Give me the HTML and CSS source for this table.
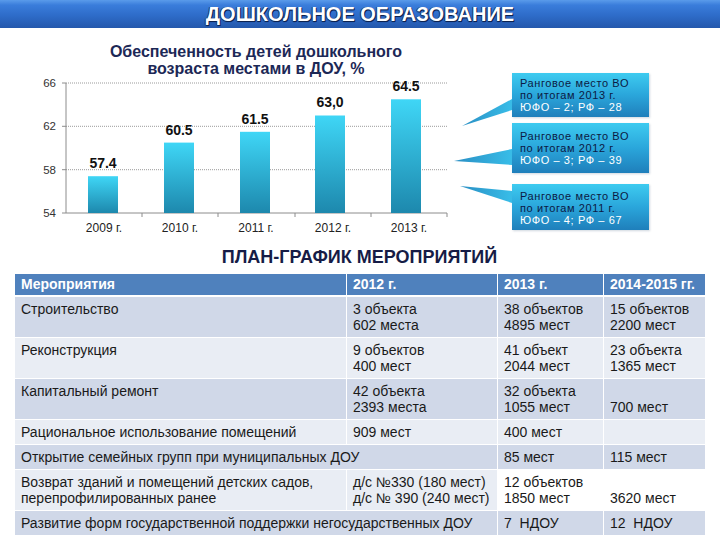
FILE: index.html
```html
<!DOCTYPE html>
<html lang="ru">
<head>
<meta charset="utf-8">
<title>Дошкольное образование</title>
<link rel="stylesheet" href="styles.css">
</head>
<body>
<header class="topbar"><h1>ДОШКОЛЬНОЕ ОБРАЗОВАНИЕ</h1></header>

<section class="chart-area">
  <div class="chart">
    <h2 class="chart-title">Обеспеченность детей дошкольного<br>возраста местами в ДОУ, %</h2>
    <svg class="chart-svg" width="512" height="162" viewBox="0 0 512 162">
      <defs>
        <linearGradient id="bar" x1="0" y1="0" x2="0" y2="1">
          <stop offset="0" stop-color="#3fd6f6"/>
          <stop offset="1" stop-color="#1d88ad"/>
        </linearGradient>
        <linearGradient id="tail" x1="0" y1="0" x2="1" y2="0">
          <stop offset="0" stop-color="#2a8fc4"/>
          <stop offset="1" stop-color="#38bde8"/>
        </linearGradient>
      </defs>
      <g class="grid">
        <line x1="66" y1="5" x2="447" y2="5"/>
        <line x1="66" y1="48.3" x2="447" y2="48.3"/>
        <line x1="66" y1="91.7" x2="447" y2="91.7"/>
      </g>
      <g class="axis">
        <line x1="66" y1="5" x2="66" y2="135"/>
        <line x1="66" y1="135" x2="447" y2="135"/>
        <line x1="62" y1="5" x2="66" y2="5"/>
        <line x1="62" y1="48.3" x2="66" y2="48.3"/>
        <line x1="62" y1="91.7" x2="66" y2="91.7"/>
        <line x1="62" y1="135" x2="66" y2="135"/>
        <line x1="142" y1="135" x2="142" y2="139"/>
        <line x1="218" y1="135" x2="218" y2="139"/>
        <line x1="295" y1="135" x2="295" y2="139"/>
        <line x1="371" y1="135" x2="371" y2="139"/>
        <line x1="447" y1="135" x2="447" y2="139"/>
      </g>
      <g class="ylabels">
        <text x="56" y="9">66</text>
        <text x="56" y="52.3">62</text>
        <text x="56" y="95.7">58</text>
        <text x="56" y="139">54</text>
      </g>
      <g>
        <rect x="88" y="98.2" width="30" height="36.8" fill="url(#bar)"/>
        <rect x="164" y="64.6" width="30" height="70.4" fill="url(#bar)"/>
        <rect x="240" y="53.8" width="30" height="81.2" fill="url(#bar)"/>
        <rect x="315" y="37.5" width="30" height="97.5" fill="url(#bar)"/>
        <rect x="391" y="21.3" width="30" height="113.7" fill="url(#bar)"/>
      </g>
      <g class="values">
        <text x="103" y="90">57.4</text>
        <text x="179" y="56.5">60.5</text>
        <text x="255" y="45.5">61.5</text>
        <text x="330" y="29">63,0</text>
        <text x="406" y="12.5">64.5</text>
      </g>
      <g class="xlabels">
        <text x="104" y="154">2009 г.</text>
        <text x="180" y="154">2010 г.</text>
        <text x="256" y="154">2011 г.</text>
        <text x="333" y="154">2012 г.</text>
        <text x="409" y="154">2013 г.</text>
      </g>
      <g fill="url(#tail)">
        <polygon points="512,21 462,48 512,32"/>
        <polygon points="512,71 454,83 512,87"/>
        <polygon points="512,113 460,108 512,125"/>
      </g>
    </svg>
  </div>
  <div class="callouts">
    <div class="callout c1"><span class="dark">Ранговое место ВО<br>по итогам 2013 г.</span><br><span class="light">ЮФО – 2; РФ – 28</span></div>
    <div class="callout c2"><span class="dark">Ранговое место ВО<br>по итогам 2012 г.</span><br><span class="light">ЮФО – 3; РФ – 39</span></div>
    <div class="callout c3"><span class="dark">Ранговое место ВО<br>по итогам 2011 г.</span><br><span class="light">ЮФО – 4; РФ – 67</span></div>
  </div>
</section>

<h2 class="plan-title">ПЛАН-ГРАФИК МЕРОПРИЯТИЙ</h2>

<table class="plan">
  <colgroup>
    <col class="w1"><col class="w2"><col class="w3"><col class="w4">
  </colgroup>
  <thead>
    <tr><th>Мероприятия</th><th>2012 г.</th><th>2013 г.</th><th>2014-2015 гг.</th></tr>
  </thead>
  <tbody>
    <tr class="dark-row"><td>Строительство</td><td>3 объекта<br>602 места</td><td>38 объектов<br>4895 мест</td><td>15 объектов<br>2200 мест</td></tr>
    <tr class="light-row"><td>Реконструкция</td><td>9 объектов<br>400 мест</td><td>41 объект<br>2044 мест</td><td>23 объекта<br>1365 мест</td></tr>
    <tr class="dark-row"><td>Капитальный ремонт</td><td>42 объекта<br>2393 места</td><td>32 объекта<br>1055 мест</td><td class="bottom">700 мест</td></tr>
    <tr class="light-row"><td>Рациональное использование помещений</td><td>909 мест</td><td>400 мест</td><td></td></tr>
    <tr class="dark-row"><td colspan="2">Открытие семейных групп при муниципальных ДОУ</td><td>85 мест</td><td>115 мест</td></tr>
    <tr class="light-row"><td>Возврат зданий и помещений детских садов,<br>перепрофилированных ранее</td><td>д/с №330 (180 мест)<br>д/с № 390 (240 мест)</td><td class="white">12 объектов<br>1850 мест</td><td class="white bottom">3620 мест</td></tr>
    <tr class="dark-row"><td colspan="2">Развитие форм государственной поддержки негосударственных ДОУ</td><td>7&nbsp; НДОУ</td><td>12&nbsp; НДОУ</td></tr>
  </tbody>
</table>
</body>
</html>
```

FILE: styles.css
```css
* { box-sizing: border-box; }
html, body { margin: 0; padding: 0; background: #fff; }
body {
  width: 720px;
  height: 540px;
  overflow: hidden;
  font-family: "Liberation Sans", Arial, sans-serif;
  color: #1a1a1a;
}

.topbar {
  height: 28px;
  background: linear-gradient(to bottom, #5a9bea 0%, #3a7ddb 18%, #2e6cc9 55%, #2458ac 100%);
  display: flex;
  align-items: center;
  justify-content: center;
}
.topbar h1 {
  margin: 0;
  font-size: 20px;
  font-weight: bold;
  color: #fff;
  line-height: 28px;
  text-shadow: 1px 1px 0 #0d2350, -1px 0 0 #163a7a, 0 1px 1px #0d2350;
}

.chart-area {
  display: flex;
  height: 212px;
}
.chart {
  width: 512px;
  flex: none;
  display: flex;
  flex-direction: column;
}
.chart-title {
  margin: 15px 0 0;
  height: 35px;
  font-size: 16px;
  line-height: 17px;
  font-weight: bold;
  color: #1c2856;
  text-align: center;
  width: 512px;
}
.chart-svg { display: block; }
.grid line { stroke: #9a9a9a; stroke-width: 1; stroke-dasharray: 1 1; }
.axis line { stroke: #8c8c8c; stroke-width: 1; }
.ylabels text {
  font-family: "Liberation Sans", Arial, sans-serif;
  font-size: 11.5px;
  fill: #333;
  text-anchor: end;
}
.values text {
  font-family: "Liberation Sans", Arial, sans-serif;
  font-size: 14px;
  font-weight: bold;
  fill: #111;
  text-anchor: middle;
}
.xlabels text {
  font-family: "Liberation Sans", Arial, sans-serif;
  font-size: 12px;
  fill: #222;
  text-anchor: middle;
}

.callouts {
  display: flex;
  flex-direction: column;
  padding-top: 45px;
}
.callout {
  width: 137px;
  height: 46px;
  padding: 4px 8px 0;
  font-size: 11px;
  line-height: 12px;
  letter-spacing: 0.6px;
  background: linear-gradient(to bottom, #3ecbf0 0%, #2aa6db 50%, #1f7fbb 100%);
  box-shadow: 1px 1px 2px rgba(120,140,160,0.35);
}
.callout .dark { color: #0c1a44; }
.callout .light { color: #fff; }
.callout.c1 { height: 44px; }
.callout.c2 { margin-top: 6px; height: 50px; padding-top: 7px; }
.callout.c3 { margin-top: 11px; padding-top: 6px; }

.plan-title {
  margin: 7px 0 0 14px;
  width: 691px;
  text-align: center;
  font-size: 18px;
  line-height: 20px;
  font-weight: bold;
  color: #161c46;
}

.plan {
  margin: 6px 0 0 14px;
  width: 691px;
  border-collapse: collapse;
  table-layout: fixed;
  font-size: 14px;
  line-height: 16px;
}
.w1 { width: 332px; }
.w2 { width: 151px; }
.w3 { width: 106px; }
.w4 { width: 102px; }
.plan th, .plan td {
  border: 1px solid #fff;
  text-align: left;
  vertical-align: top;
  padding: 4px 6px 4px;
  white-space: nowrap;
  overflow: visible;
}
.plan th {
  background: #4f81bd;
  color: #fff;
  font-weight: bold;
  padding: 2px 6px 3px;
  border-bottom: 2px solid #fff;
}
.dark-row td { background: #d0d8e8; }
.light-row td { background: #e9edf4; }
.plan td.white { background: #fff; }
.plan td.bottom { vertical-align: bottom; }
```
